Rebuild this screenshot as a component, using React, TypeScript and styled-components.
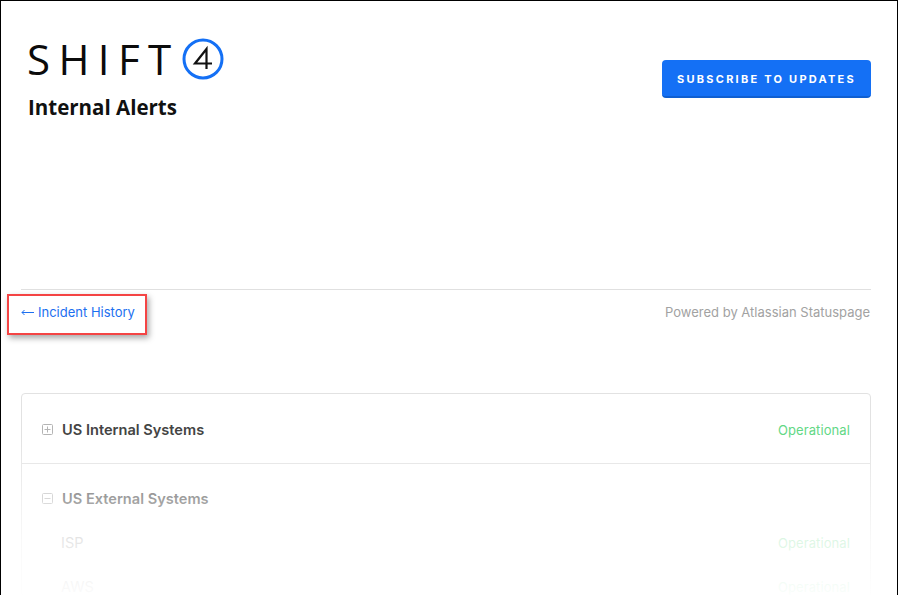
import styled, { createGlobalStyle } from 'styled-components';

const GlobalStyle = createGlobalStyle`
  html, body {
    margin: 0;
    padding: 0;
    background: #fff;
  }
`;

const Page = styled.div`
  position: relative;
  box-sizing: border-box;
  width: 898px;
  height: 595px;
  overflow: hidden;
  background: #fff;
  border: 1px solid #000;
  border-bottom: none;
  padding: 0 26px 0 20px;
  font-family: Inter, "Liberation Sans", sans-serif;
`;

const Header = styled.header`
  display: flex;
  justify-content: space-between;
  height: 288px;
  border-bottom: 1px solid #e0e0e0;
`;

const Brand = styled.div`
  padding: 37px 0 0 6px;
`;

const Logo = styled.div`
  display: flex;
  align-items: center;
  height: 42px;
  gap: 11px;
`;

const LogoWord = styled.span`
  font-family: "Open Sans", sans-serif;
  font-weight: 500;
  font-size: 42px;
  line-height: 42px;
  letter-spacing: 8.4px;
  color: #0b0b0b;
  margin-right: -8.4px;
`;

const PageName = styled.h1`
  margin: 15px 0 0 1px;
  font-family: "Open Sans", sans-serif;
  font-size: 20.5px;
  line-height: 24px;
  font-weight: 700;
  color: #111;
`;

const SubscribeButton = styled.button`
  margin-top: 59px;
  width: 209px;
  height: 38px;
  padding: 1px 0 0;
  border: none;
  border-bottom: 2px solid #0f5fd1;
  border-radius: 4px;
  background: #1470f5;
  color: #fff;
  font-family: Inter, sans-serif;
  font-size: 11px;
  font-weight: 700;
  letter-spacing: 2.25px;
`;

const SubBar = styled.div`
  display: flex;
  justify-content: space-between;
  align-items: center;
  height: 44px;
  font-size: 13px;
`;

const HistoryLink = styled.a`
  display: flex;
  align-items: center;
  gap: 4px;
  color: #1c6ff0;
`;

const Powered = styled.span`
  color: #a2a2a2;
  margin-right: 1px;
`;

const Callout = styled.div`
  position: absolute;
  left: 6px;
  top: 293px;
  width: 140px;
  height: 41px;
  box-sizing: border-box;
  border: 2px solid #f44444;
  box-shadow: 2px 3px 6px rgba(0, 0, 0, 0.35);
`;

const Card = styled.section`
  margin-top: 59px;
  border: 1px solid #e2e2e2;
  border-radius: 4px;
`;

const Group = styled.div<{ $open?: boolean }>`
  padding: ${({ $open }) => ($open ? '25px 20px 0' : '26px 20px 24px')};
  & + & {
    border-top: 1px solid #e2e2e2;
  }
`;

const Row = styled.div<{ $child?: boolean }>`
  display: flex;
  justify-content: space-between;
  align-items: center;
  height: 19px;
  margin-top: ${({ $child }) => ($child ? '25px' : '0')};
  padding-left: ${({ $child }) => ($child ? '19px' : '0')};
`;

const GroupLabel = styled.div`
  display: flex;
  align-items: center;
  gap: 9px;
  font-size: 14.6px;
  font-weight: 600;
  color: #444;
`;

const ChildLabel = styled.span`
  font-size: 14.5px;
  color: #8c8c8c;
`;

const Status = styled.span`
  font-size: 13px;
  letter-spacing: 0.1px;
  color: #62d885;
`;

const Fade = styled.div`
  position: absolute;
  left: -1px;
  right: -1px;
  top: 435px;
  bottom: 0;
  background: linear-gradient(
    to bottom,
    rgba(255, 255, 255, 0),
    rgba(255, 255, 255, 0.32) 25%,
    rgba(255, 255, 255, 0.78) 65%,
    rgba(255, 255, 255, 0.97) 100%
  );
  pointer-events: none;
`;

function ToggleIcon({ open }: { open?: boolean }) {
  return (
    <svg width="11" height="11" viewBox="0 0 11 11" fill="none" stroke="#b4b4b4">
      <rect x="0.5" y="0.5" width="10" height="10" rx="1" />
      <path d="M2.5 5.5h6" />
      {!open && <path d="M5.5 2.5v6" />}
    </svg>
  );
}

function LongArrow() {
  return (
    <svg width="13" height="7" viewBox="0 0 13 7" fill="none" stroke="#1c6ff0">
      <path d="M13 3.5H1M3.5 1 1 3.5 3.5 6" />
    </svg>
  );
}

export default function App() {
  return (
    <>
      <GlobalStyle />
      <Page>
        <Header>
          <Brand>
            <Logo>
              <LogoWord>SHIFT</LogoWord>
              <svg width="42" height="42" viewBox="0 0 42 42" fill="none">
                <circle cx="21" cy="21" r="19" stroke="#1470f5" strokeWidth="3" />
                <path d="M24.5 31V11L13 25.5h17" stroke="#111" strokeWidth="2.2" />
              </svg>
            </Logo>
            <PageName>Internal Alerts</PageName>
          </Brand>
          <SubscribeButton type="button">SUBSCRIBE TO UPDATES</SubscribeButton>
        </Header>
        <SubBar>
          <HistoryLink>
            <LongArrow />
            Incident History
          </HistoryLink>
          <Powered>Powered by Atlassian Statuspage</Powered>
        </SubBar>
        <Card>
          <Group>
            <Row>
              <GroupLabel>
                <ToggleIcon />
                US Internal Systems
              </GroupLabel>
              <Status>Operational</Status>
            </Row>
          </Group>
          <Group $open>
            <Row>
              <GroupLabel>
                <ToggleIcon open />
                US External Systems
              </GroupLabel>
            </Row>
            <Row $child>
              <ChildLabel>ISP</ChildLabel>
              <Status>Operational</Status>
            </Row>
            <Row $child>
              <ChildLabel>AWS</ChildLabel>
              <Status>Operational</Status>
            </Row>
          </Group>
        </Card>
        <Callout />
        <Fade />
      </Page>
    </>
  );
}
